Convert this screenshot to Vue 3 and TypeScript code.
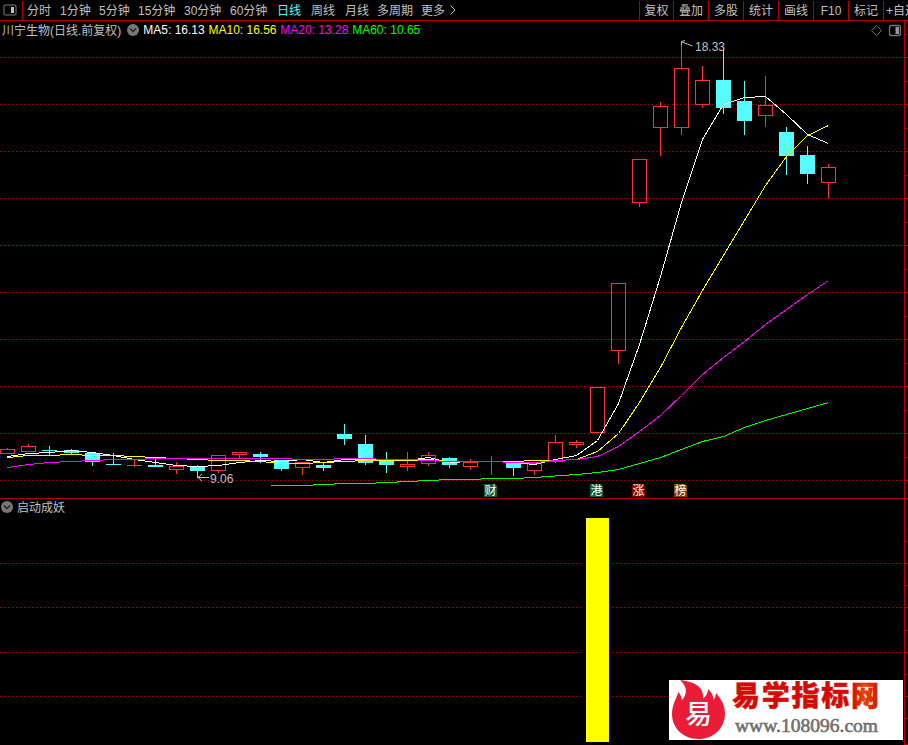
<script setup lang="ts">
interface Candle { x: number; high: number; top: number; bottom: number; low: number; up: boolean }

const periods = ['分时', '1分钟', '5分钟', '15分钟', '30分钟', '60分钟', '日线', '周线', '月线', '多周期', '更多']
const tools = ['复权', '叠加', '多股', '统计', '画线', 'F10', '标记', '+自选']
const averages = [
  { label: 'MA5: 16.13', cls: 'ma5' },
  { label: 'MA10: 16.56', cls: 'ma10' },
  { label: 'MA20: 13.28', cls: 'ma20' },
  { label: 'MA60: 10.65', cls: 'ma60' },
]

// x, high, body top, body bottom, low, rising
const raw: [number, number, number, number, number, number][] = [
  [7, 448, 449, 453, 453, 1], [28, 444, 446, 451, 451, 1], [49, 446, 450, 450, 454, 0],
  [71, 449, 450, 452, 453, 0], [92, 453, 453, 461, 465, 0], [113, 453, 464, 464, 464, 0],
  [134, 459, 465, 465, 466, 1], [155, 459, 465, 466, 466, 0], [176, 462, 466, 469, 473, 1],
  [197, 465, 467, 470, 477, 0], [218, 455, 455, 470, 472, 1], [239, 452, 452, 454, 457, 1],
  [260, 452, 454, 456, 462, 0], [281, 460, 460, 468, 470, 0], [302, 462, 462, 467, 474, 1],
  [323, 463, 465, 467, 470, 0], [344, 424, 434, 438, 444, 0], [365, 435, 444, 462, 464, 0],
  [386, 452, 460, 464, 472, 0], [407, 452, 464, 466, 470, 1], [428, 452, 455, 463, 465, 1],
  [449, 457, 458, 464, 467, 0], [470, 459, 462, 466, 469, 1], [491, 456, 461, 461, 474, 1],
  [513, 462, 463, 467, 475, 0], [534, 463, 463, 470, 474, 1], [555, 435, 442, 461, 462, 1],
  [576, 440, 442, 444, 447, 1], [597, 387, 387, 432, 432, 1], [618, 283, 283, 350, 363, 1],
  [639, 159, 159, 202, 206, 1], [660, 102, 106, 127, 155, 1], [681, 41, 68, 127, 134, 1],
  [702, 66, 80, 104, 107, 1], [723, 48, 80, 107, 113, 0], [744, 81, 101, 120, 134, 0],
  [765, 76, 105, 115, 126, 1], [786, 127, 132, 155, 174, 0], [807, 146, 155, 173, 183, 0],
  [828, 164, 167, 182, 197, 1],
]
const candles: Candle[] = raw.map(([x, high, top, bottom, low, up]) => ({ x, high, top, bottom, low, up: up === 1 }))
const rising = candles.filter((c) => c.up)
const falling = candles.filter((c) => !c.up)

const line = (values: number[], from = 0) =>
  values.map((y, i) => `${candles[i + from].x + 0.5},${y + 0.5}`).join(' ')

const ma5 = line([456, 453, 452, 450, 452, 455, 459, 462, 465, 466, 465, 462, 460, 461, 459, 462, 459, 459, 460, 460, 457,
  462, 461, 461, 462, 464, 459, 455, 440, 403, 344, 276, 202, 139, 104, 97, 96, 114, 134, 143])
const ma10 = line([457, 455, 455, 454, 455, 455, 456, 457, 458, 459, 460, 460, 461, 463, 463, 462, 461, 460, 460, 460, 459,
  461, 461, 461, 461, 460, 460, 459, 451, 433, 402, 367, 327, 290, 255, 220, 185, 156, 135, 125])
const ma20 = line([467, 464, 462, 461, 460, 459, 459, 458, 458, 458, 458, 458, 458, 458, 459, 459, 458, 458, 459, 459, 460,
  461, 461, 461, 462, 462, 460, 459, 456, 446, 431, 415, 395, 374, 357, 341, 324, 309, 294, 280])
const ma60 = '271,485.5 ' + line([485, 484, 483, 483, 482, 481, 480, 479, 479, 478, 478, 477, 475.5, 474, 472, 469, 463,
  457, 449, 441, 436, 427, 420, 414, 408, 402], 14)

const gridRows = [57, 104, 151, 198, 245, 292, 339, 386, 433, 480, 563, 607, 652, 696]
const minorTicks = [34, 81, 128, 175, 222, 269, 316, 363, 410, 457, 541, 585, 630, 674, 718]

const badges = [
  { x: 484, text: '财', fill: '#0d5c3c' },
  { x: 590, text: '港', fill: '#0d5c3c' },
  { x: 632, text: '涨', fill: '#800000' },
  { x: 674, text: '榜', fill: '#844200' },
]
</script>

<template>
  <div class="terminal">
    <header class="toolbar">
      <div class="layout-toggle">
        <svg width="14" height="12" viewBox="0 0 14 12">
          <rect x="1" y="1" width="12" height="10" rx="2" fill="none" stroke="#555" stroke-width="1.5" />
          <rect x="8" y="3" width="3" height="6" fill="#c0c0c0" />
        </svg>
      </div>
      <nav class="periods">
        <span v-for="p in periods" :key="p" :class="{ active: p === '日线' }">{{ p }}</span>
        <svg class="chevron" width="6" height="10" viewBox="0 0 6 10"><path d="M.5.5 5 5 .5 9.5" /></svg>
      </nav>
      <div class="tools">
        <span v-for="t in tools" :key="t">{{ t }}</span>
      </div>
    </header>

    <main class="charts">
      <svg class="plot" width="908" height="724" viewBox="0 21 908 724">
        <g class="crisp">
          <line v-for="y in gridRows" :key="y" class="grid" x1="0" x2="904" :y1="y + 0.5" :y2="y + 0.5" />
          <rect class="frame" x="0" y="498" width="908" height="1" />
          <rect class="frame" x="904" y="21" width="1" height="724" />
          <rect v-for="y in gridRows" :key="'t' + y" class="frame" x="905" :y="y" width="3" height="1" />
          <rect v-for="y in minorTicks" :key="'m' + y" class="frame" x="905" :y="y" width="2" height="1" />
          <rect class="frame" x="904" y="744" width="4" height="1" />

          <g v-for="c in rising" :key="c.x" class="up">
            <rect v-if="c.top > c.high" :x="c.x" :y="c.high" width="1" :height="c.top - c.high" />
            <rect v-if="c.low > c.bottom" :x="c.x" :y="c.bottom" width="1" :height="c.low - c.bottom + 1" />
            <rect v-if="c.top === c.bottom" :x="c.x - 7" :y="c.top" width="15" height="1" />
            <rect v-else class="hollow" :x="c.x - 6.5" :y="c.top + 0.5" width="14" :height="c.bottom - c.top" />
          </g>
          <g v-for="c in falling" :key="c.x" class="down">
            <rect :x="c.x" :y="c.high" width="1" :height="c.low - c.high + 1" />
            <rect :x="c.x - 7" :y="c.top" width="15" :height="c.bottom - c.top + 1" />
          </g>

          <polyline class="curve c5" :points="ma5" />
          <polyline class="curve c10" :points="ma10" />
          <polyline class="curve c20" :points="ma20" />
          <polyline class="curve c60" :points="ma60" />
          <rect x="584" y="518" width="27" height="224" fill="#000" />
          <rect x="586" y="518" width="23" height="224" fill="#ff0" />
        </g>

        <path class="pointer" d="M681.5 45V41.5L685 40.5M682 42l4 1.5 6.5 2.5M197.5 477.5H209M202 474l-4 3.5 4 3.5" />
        <text class="mark" x="695" y="51">18.33</text>
        <text class="mark" x="210" y="483">9.06</text>

        <g v-for="b in badges" :key="b.x">
          <path :d="`M${b.x} 484h11l2 2v11h-13z`" :fill="b.fill" />
          <text class="badge" :x="b.x + 0.5" y="495">{{ b.text }}</text>
        </g>

        <path d="M876.5 25.5l5 5-5 5-5-5z" fill="none" stroke="#5c7468" />
        <rect x="889.5" y="25.5" width="11" height="10" rx="2" fill="none" stroke="#777" stroke-width="1.3" />
        <rect x="895.5" y="27" width="3.5" height="7" fill="#999" />

        <g class="brand">
          <rect x="669" y="680" width="234" height="60" fill="#fff" />
          <path fill="#ea1c38" d="M680 680C689 681 699 684 702 691Q703.500 694 703 698.500Q708 695 708 689Q713 693 713.500 700Q716 697 716 693Q725 703 725 713C725 729 713 739 698.500 739C683 739 672 728 672 714C672 705 676 699 678.500 692Q681 695 682 700C687 695 688 687 680 680Z" />
          <text class="seal" x="685" y="724">易</text>
          <defs>
            <linearGradient id="ember" x1="0" x2="1">
              <stop offset="0" stop-color="#d60a0a" />
              <stop offset=".82" stop-color="#d40a05" />
              <stop offset=".9" stop-color="#ef4a00" />
              <stop offset="1" stop-color="#cf1400" />
            </linearGradient>
          </defs>
          <text class="site" x="732" y="706" textLength="147">易学指标网</text>
          <text class="url" x="735" y="732" textLength="143" lengthAdjust="spacingAndGlyphs">www.108096.com</text>
        </g>
      </svg>

      <div class="legend">
        <span class="stock">川宁生物(日线.前复权)</span>
        <svg class="drop" width="12" height="12" viewBox="0 0 12 12"><circle cx="6" cy="6" r="6" /><path d="M3 4.5 6 7.5 9 4.5" /></svg>
        <span v-for="m in averages" :key="m.cls" :class="m.cls">{{ m.label }}</span>
      </div>
      <div class="legend indicator">
        <svg class="drop" width="12" height="12" viewBox="0 0 12 12"><circle cx="6" cy="6" r="6" /><path d="M3 4.5 6 7.5 9 4.5" /></svg>
        <span>启动成妖</span>
      </div>
    </main>
  </div>
</template>

<style>
body { background: #000; overflow: hidden; }
</style>

<style scoped>
.terminal { width: 908px; height: 745px; overflow: hidden; background: #000; color: #c0c0c0; font: 12px/18px "Liberation Sans", "Noto Sans CJK SC", sans-serif; }
.toolbar { display: flex; height: 21px; box-sizing: border-box; border-bottom: 1px solid #b40000; overflow: hidden; }
.layout-toggle { box-sizing: border-box; width: 23px; padding: 3px 3px; border-right: 1px solid #b40000; margin-top: 1px; line-height: 0; }
.periods { display: grid; grid-template-columns: 33px 39px 39px 46px 46px 47px 34px 34px 32px 44px 29px 8px; padding-left: 4px; padding-top: 2px; white-space: nowrap; }
.active { color: #54fcfc; }
.chevron { margin-top: 3px; fill: none; stroke: #c0c0c0; }
.tools { display: grid; grid-template-columns: 34px repeat(6, 35px) 25px; margin-left: auto; margin-top: 1px; line-height: 20px; }
.tools span { border-left: 1px solid #b40000; text-align: center; white-space: nowrap; height: 19px; }
.tools span:last-child { text-align: left; padding-left: 2px; overflow: hidden; }
.charts { position: relative; height: 724px; }
.plot { display: block; }
.legend { position: absolute; left: 2px; top: 0; height: 18px; display: flex; align-items: center; white-space: nowrap; }
.legend .drop { margin: 0 4px 0 6px; }
.legend .ma5, .legend .ma10, .legend .ma20 { margin-right: 3.8px; }
.indicator { left: 1px; top: 477px; }
.indicator .drop { margin: 0 4px 0 0; }
.indicator span { padding-top: 2px; }
.stock { padding-top: 1px; }
.drop circle { fill: #777; }
.drop path { fill: none; stroke: #1c2420; stroke-width: 1.4; }
.ma5 { color: #fff; }
.ma10 { color: #ff0; }
.ma20 { color: #f0f; }
.ma60 { color: #0f0; }
.crisp { shape-rendering: crispEdges; }
.grid { stroke: #b00000; stroke-width: 1; stroke-dasharray: 1 3; }
.frame { fill: #b40000; }
.up { fill: #ff3232; }
.hollow { fill: none; stroke: #ff3232; }
.down { fill: #54fcfc; }
.curve { fill: none; stroke-width: 1; }
.c5 { stroke: #fff; }
.c10 { stroke: #ff0; }
.c20 { stroke: #f0f; }
.c60 { stroke: #0f0; }
.pointer { fill: none; stroke: #c0c0c0; }
.mark { fill: #c0c0c0; font-size: 12px; }
.badge { fill: #fff; font-size: 12px; }
.seal { fill: #fff; font: 500 27px "Noto Sans CJK SC", sans-serif; }
.site { fill: url(#ember); stroke: #d40a05; stroke-width: .4; font: 900 28px "Noto Sans CJK SC", sans-serif; }
.url { fill: #707070; stroke: #707070; stroke-width: .6; font: 18.5px "Liberation Serif", serif; }
</style>
